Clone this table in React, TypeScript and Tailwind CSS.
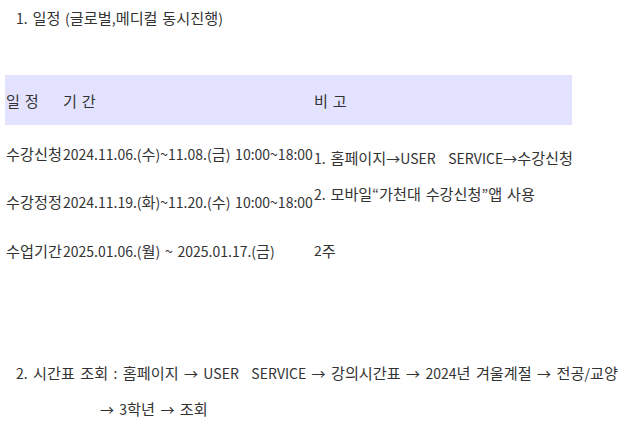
import React from "react";

function T({ s }: { s: string }) {
  const parts = s.split(/([\uAC00-\uD7A3]+|\u00a0+ )/);
  return (
    <>
      {parts.map((p, i) =>
        /[\uAC00-\uD7A3]/.test(p) ? (
          <span key={i} className="text-[15.2px]">
            {p}
          </span>
        ) : /\u00a0/.test(p) ? (
          <span key={i} className="[word-spacing:0px]">
            {p}
          </span>
        ) : (
          <React.Fragment key={i}>{p}</React.Fragment>
        )
      )}
    </>
  );
}

export default function App() {
  const font = {
    fontFamily: '"Noto Sans CJK KR", "Noto Sans", sans-serif',
  };
  return (
    <div className="w-[624px] h-[423px] bg-white text-[#333] text-[14px] overflow-hidden [word-spacing:1.6px]" style={font}>
      <div className="pl-[16px] pt-[8px] h-[75px] leading-[18px] whitespace-nowrap">
        <T s="1. 일정 (글로벌,메디컬 동시진행)" />
      </div>
      <div className="ml-[5px] w-[567px]">
        <div className="h-[50px] bg-[#e3e3ff] grid grid-cols-[57px_251px_1fr] items-center pl-[1px]">
          <div><T s="일 정" /></div>
          <div><T s="기 간" /></div>
          <div><T s="비 고" /></div>
        </div>
        <div className="grid grid-cols-[57px_251px_1fr] grid-rows-[4px_48px_48px_50px] pl-[1px] whitespace-nowrap">
          <div className="row-start-2 col-start-1 flex items-center"><T s="수강신청" /></div>
          <div className="row-start-2 col-start-2 flex items-center"><span><T s="2024.11.06.(수)~11.08.(금) 10:00~18:00" /></span></div>
          <div className="row-start-2 row-span-2 col-start-3 flex flex-col justify-center leading-[35px] pb-[3px]">
            <div><T s={"1. 홈페이지→USER\u00a0\u00a0\u00a0 SERVICE→수강신청"} /></div>
            <div><T s="2. 모바일“가천대 수강신청”앱 사용" /></div>
          </div>
          <div className="row-start-3 col-start-1 flex items-center"><T s="수강정정" /></div>
          <div className="row-start-3 col-start-2 flex items-center"><span><T s="2024.11.19.(화)~11.20.(수) 10:00~18:00" /></span></div>
          <div className="row-start-4 col-start-1 flex items-center"><T s="수업기간" /></div>
          <div className="row-start-4 col-start-2 flex items-center"><span><T s="2025.01.06.(월) ~ 2025.01.17.(금)" /></span></div>
          <div className="row-start-4 col-start-3 flex items-center"><T s="2주" /></div>
        </div>
      </div>
      <div className="pl-[16px] mt-[80px] leading-[35px] whitespace-nowrap [word-spacing:2.2px]">
        <div><T s={"2. 시간표 조회 : 홈페이지 → USER\u00a0\u00a0\u00a0 SERVICE → 강의시간표 → 2024년 겨울계절 → 전공/교양"} /></div>
        <div className="pl-[84px]"><T s="→ 3학년 → 조회" /></div>
      </div>
    </div>
  );
}
